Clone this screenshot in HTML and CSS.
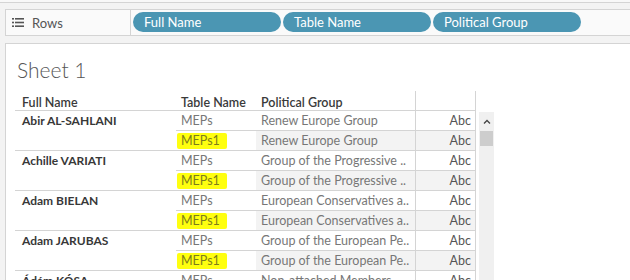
FILE: index.html
```html
<!DOCTYPE html>
<html lang="en">
<head>
    <meta charset="UTF-8">
    <title>Sheet 1</title>
    <link rel="stylesheet" href="styles.css">
</head>
<body>
    <div class="top-strip"></div>

    <div class="shelf">
        <div class="shelf-label">
            <svg class="shelf-icon" width="12" height="9" viewBox="0 0 12 9">
                <rect x="0" y="0" width="2" height="1.6" fill="#555"/>
                <rect x="3" y="0" width="9" height="1.6" fill="#555"/>
                <rect x="0" y="3.7" width="2" height="1.6" fill="#555"/>
                <rect x="3" y="3.7" width="9" height="1.6" fill="#555"/>
                <rect x="0" y="7.4" width="2" height="1.6" fill="#555"/>
                <rect x="3" y="7.4" width="9" height="1.6" fill="#555"/>
            </svg>
            <span>Rows</span>
        </div>
        <div class="pills">
            <div class="pill">Full Name</div>
            <div class="pill">Table Name</div>
            <div class="pill">Political Group</div>
        </div>
    </div>

    <div class="sheet">
        <h1 class="sheet-title">Sheet 1</h1>

        <div class="table-wrap">
            <div class="table">
                <div class="head">
                    <div class="cell name">Full Name</div>
                    <div class="cell">Table Name</div>
                    <div class="cell">Political Group</div>
                    <div class="cell abc"></div>
                </div>

                <div class="group">
                    <div class="cell name">Abir AL-SAHLANI</div>
                    <div class="lines">
                        <div class="line">
                            <div class="cell">MEPs</div>
                            <div class="cell">Renew Europe Group</div>
                            <div class="cell abc">Abc</div>
                        </div>
                        <div class="line alt">
                            <div class="cell"><span class="mark">MEPs1</span></div>
                            <div class="cell">Renew Europe Group</div>
                            <div class="cell abc">Abc</div>
                        </div>
                    </div>
                </div>

                <div class="group">
                    <div class="cell name">Achille VARIATI</div>
                    <div class="lines">
                        <div class="line">
                            <div class="cell">MEPs</div>
                            <div class="cell">Group of the Progressive ..</div>
                            <div class="cell abc">Abc</div>
                        </div>
                        <div class="line alt">
                            <div class="cell"><span class="mark">MEPs1</span></div>
                            <div class="cell">Group of the Progressive ..</div>
                            <div class="cell abc">Abc</div>
                        </div>
                    </div>
                </div>

                <div class="group">
                    <div class="cell name">Adam BIELAN</div>
                    <div class="lines">
                        <div class="line">
                            <div class="cell">MEPs</div>
                            <div class="cell">European Conservatives a..</div>
                            <div class="cell abc">Abc</div>
                        </div>
                        <div class="line alt">
                            <div class="cell"><span class="mark">MEPs1</span></div>
                            <div class="cell">European Conservatives a..</div>
                            <div class="cell abc">Abc</div>
                        </div>
                    </div>
                </div>

                <div class="group">
                    <div class="cell name">Adam JARUBAS</div>
                    <div class="lines">
                        <div class="line">
                            <div class="cell">MEPs</div>
                            <div class="cell">Group of the European Pe..</div>
                            <div class="cell abc">Abc</div>
                        </div>
                        <div class="line alt">
                            <div class="cell"><span class="mark">MEPs1</span></div>
                            <div class="cell">Group of the European Pe..</div>
                            <div class="cell abc">Abc</div>
                        </div>
                    </div>
                </div>

                <div class="group">
                    <div class="cell name">Ádám KÓSA</div>
                    <div class="lines">
                        <div class="line">
                            <div class="cell">MEPs</div>
                            <div class="cell">Non-attached Members</div>
                            <div class="cell abc">Abc</div>
                        </div>
                    </div>
                </div>
            </div>

            <div class="scrollbar">
                <div class="scroll-up">
                    <svg width="8" height="5" viewBox="0 0 8 5">
                        <path d="M1 4.5 L4 1.5 L7 4.5" fill="none" stroke="#444" stroke-width="1.3"/>
                    </svg>
                </div>
                <div class="scroll-thumb"></div>
            </div>
        </div>
    </div>
</body>
</html>
```

FILE: styles.css
```css
* {
    margin: 0;
    padding: 0;
    box-sizing: border-box;
}

body {
    font-family: Lato, 'Liberation Sans', sans-serif;
    background: #f3f3f3;
    color: #333;
    height: 280px;
    overflow: hidden;
}

.top-strip {
    height: 3px;
    background: #f8f8f8;
    border-bottom: 1px solid #d4d4d4;
}

.shelf {
    display: flex;
    height: 27px;
    margin: 6px 0 0 5px;
    background: #fafafa;
    border: 1px solid #d4d4d4;
    border-right: none;
}

.shelf-label {
    width: 125px;
    border-right: 1px solid #d4d4d4;
    display: flex;
    align-items: center;
    padding-left: 6px;
    gap: 8px;
    font-size: 13px;
    color: #555;
}

.pills {
    display: flex;
    gap: 2px;
    padding: 2px 0 0 2px;
}

.pill {
    width: 148px;
    height: 20px;
    border-radius: 10px;
    background: #4b96b3;
    color: #fff;
    font-size: 13px;
    line-height: 20px;
    padding-left: 11px;
}

.sheet {
    margin: 7px 0 0 5px;
    background: #fff;
    border-top: 1px solid #d4d4d4;
    border-left: 1px solid #d4d4d4;
    height: 300px;
    padding-left: 9px;
}

.sheet-title {
    font-size: 21px;
    font-weight: 300;
    color: #555;
    line-height: 28px;
    padding: 12px 0 0 2px;
    height: 47px;
}

.table-wrap {
    display: flex;
    align-items: flex-start;
    gap: 3px;
}

.table {
    width: 461px;
    font-size: 12.5px;
}

.cell {
    height: 19px;
    line-height: 19px;
    padding-left: 5px;
    white-space: nowrap;
    overflow: hidden;
}

.cell.name {
    padding-left: 7px;
}

.head,
.line {
    display: grid;
    grid-template-columns: 80px 159px 61px;
}

.head {
    grid-template-columns: 161px 80px 159px 61px;
    height: 20px;
    border-bottom: 1px solid #d4d4d4;
}

.head .cell {
    height: 20px;
    line-height: 24px;
    font-weight: 600;
    color: #3a3a3a;
}

.group {
    display: grid;
    grid-template-columns: 161px 1fr;
    border-bottom: 1px solid #d4d4d4;
}

.group .name {
    font-size: 12px;
    font-weight: 700;
    color: #383838;
}

.line {
    color: #777;
}

.line + .line {
    border-top: 1px solid #d4d4d4;
}

.line.alt .cell + .cell {
    background: #f3f3f3;
}

.cell.abc {
    border-left: 1px solid #d4d4d4;
    border-right: 1px solid #d4d4d4;
    text-align: right;
    padding: 0 4px 0 0;
    color: #555;
}

.mark {
    display: inline-block;
    height: 16px;
    line-height: 16px;
    margin-left: -4px;
    padding: 0 7px 0 4px;
    background: #ffff10;
    color: #7d7d1c;
    border-radius: 2px;
}

.scrollbar {
    margin-top: 21px;
    width: 15px;
    height: 200px;
    background: #f0f0f0;
}

.scroll-up {
    height: 19px;
    display: flex;
    justify-content: center;
    align-items: center;
}

.scroll-thumb {
    height: 15px;
    background: #cdcdcd;
    margin: 0 1px;
}
```
